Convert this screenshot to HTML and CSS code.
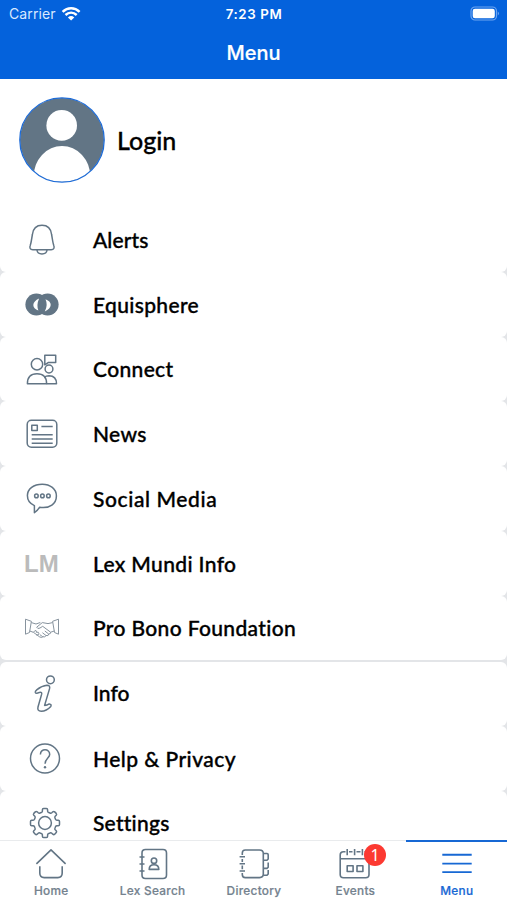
FILE: index.html
```html
<!DOCTYPE html>
<html lang="en">
<head>
  <meta charset="UTF-8" />
  <meta name="viewport" content="width=device-width, initial-scale=1">
  <title>Menu</title>
  <link rel="stylesheet" href="styles.css">
</head>
<body>
  <div class="app">
    <header class="header">
      <div class="status">
        <div class="carrier">
          Carrier
          <svg width="19" height="14" viewBox="0 0 19 14" fill="none" stroke="#fff" stroke-width="2.5">
            <path d="M0.6 4.8C5.6 0 12.6 0 17.6 4.8"/>
            <path d="M3.5 8C6.8 5 11.4 5 14.7 8"/>
            <path d="M9.1 13.4L5.9 10.4Q9.1 7.7 12.3 10.4Z" fill="#fff" stroke="none"/>
          </svg>
        </div>
        <div class="time">7:23 PM</div>
        <div class="battery">
          <svg width="31" height="15" viewBox="0 0 31 15">
            <rect x="2" y="1" width="25.5" height="13" rx="4" fill="none" stroke="#6ea5f0" stroke-width="1.2"/>
            <rect x="3.7" y="2.7" width="22.1" height="9.6" rx="2.3" fill="#fff"/>
            <path d="M28.8 5.5Q31.2 7.5 28.8 9.5Z" fill="#6ea5f0"/>
          </svg>
        </div>
      </div>
      <h1>Menu</h1>
    </header>

    <main class="content">
      <a class="login">
        <svg class="avatar" width="87" height="87" viewBox="0 0 87 87">
          <clipPath id="face"><circle cx="44" cy="43" r="42"/></clipPath>
          <circle cx="44" cy="43" r="42" fill="#627585"/>
          <circle cx="43.7" cy="28.4" r="15.3" fill="#fff"/>
          <ellipse cx="44" cy="79.5" rx="28.3" ry="30.5" fill="#fff" clip-path="url(#face)"/>
          <circle cx="44" cy="43" r="42.2" fill="none" stroke="#1e6cd8" stroke-width="1.3"/>
        </svg>
        <span>Login</span>
      </a>

      <nav class="section">
        <a class="row first">
          <svg class="icon" viewBox="0 0 36 36">
            <path d="M18 4.2C12 4.2 9 8.3 8.4 13.5L7.3 20Q7 22 6.3 24.2C5.2 27 6.2 28.7 8.8 28.7H27.2C29.8 28.7 30.8 27 29.7 24.2Q29 22 28.7 20L27.6 13.5C27 8.3 24 4.2 18 4.2Z"/>
            <path d="M13 29C13.5 34.2 22.5 34.2 23 29"/>
          </svg>
          <span class="label alerts">Alerts</span>
        </a>
        <a class="row">
          <svg class="icon" viewBox="0 0 36 36">
            <g class="solid">
              <circle cx="12.4" cy="18.5" r="11"/>
              <circle cx="23.6" cy="18.5" r="11"/>
            </g>
            <path class="hole" d="M15.1 12.5Q9.6 15 9.3 19Q9.4 22.7 14.4 24.6Q12.2 19 15.1 12.5Z"/>
            <path class="hole" d="M21.5 13.2Q27 15.5 26.7 19Q26.5 22.5 20.8 25.5Q24.2 19 21.5 13.2Z"/>
          </svg>
          <span class="label equisphere">Equisphere</span>
        </a>
        <a class="row">
          <svg class="icon" viewBox="0 0 36 36">
            <circle cx="13" cy="13.2" r="5.7"/>
            <path d="M3.4 32.7Q3.4 22.8 13 22.8T22.6 32.7Z"/>
            <circle cx="25" cy="18" r="3.9"/>
            <path d="M20.2 26.3Q22 24.8 25 24.8Q32.5 25 32.5 32.7H22.6"/>
            <path d="M20.8 4.3H31.7V11.4H24.5L20.8 13.8Z"/>
          </svg>
          <span class="label connect">Connect</span>
        </a>
        <a class="row">
          <svg class="icon" viewBox="0 0 36 36">
            <rect x="3.2" y="4.3" width="29.6" height="27" rx="4.2"/>
            <rect x="7.8" y="9.3" width="5.5" height="5.3"/>
            <path d="M17.4 10.4H28.7M7.7 18.7H28.7M7.7 23H28.7M7.7 27.2H28.7"/>
          </svg>
          <span class="label news">News</span>
        </a>
        <a class="row">
          <svg class="icon" viewBox="0 0 36 36">
            <path d="M10.4 25.6V32.7Q13.6 30.5 15.5 27.3C26 29 32.4 23.4 32.4 16C32.4 8.8 26.2 4.2 18.2 4.2C9.8 4.2 3.4 8.8 3.4 15.6C3.4 20.2 6 23.8 10.4 25.6Z"/>
            <g>
              <circle cx="12.4" cy="15.9" r="1.8"/>
              <circle cx="18.4" cy="15.9" r="1.8"/>
              <circle cx="24.4" cy="15.9" r="1.8"/>
            </g>
          </svg>
          <span class="label social">Social Media</span>
        </a>
        <a class="row">
          <span class="icon monogram">LM</span>
          <span class="label lex">Lex Mundi Info</span>
        </a>
        <a class="row">
          <svg class="icon thin" viewBox="0 0 36 36">
            <path d="M1.5 9.2L7.4 11.3L5.5 22.5L1.5 24.2ZM34.5 9.2L28.6 11.3L30.5 22.5L34.5 24.2Z"/>
            <path d="M7.4 12.6L12 14L16.3 12.5M28.6 12.6L24 13.6L18.3 12.6L12.7 17.2Q13.5 19.4 16 18L18.7 16.3L26.6 22.2Q26.8 24.2 24.7 24L20.8 21M5.7 21L9.4 22.3L15.8 27Q18 28.2 19.3 26.4M30.3 21L26.7 22.2M24.7 24Q24.6 26.4 22 25.5L18.4 22.7M22 25.5Q21 28.1 18.4 26.5L15.8 24.6"/>
            <path d="M9.4 22.3L11.2 20.4Q12.8 20.4 12.3 22.3L14.2 22.2Q15.5 23 14.3 24.8L12.2 25"/>
          </svg>
          <span class="label probono">Pro Bono Foundation</span>
        </a>
      </nav>

      <nav class="section second">
        <a class="row">
          <svg class="icon" viewBox="0 0 36 36">
            <circle cx="26.4" cy="4.8" r="3.9"/>
            <path d="M11.3 17.5Q11 16.2 12.7 14.8Q17.8 10.6 23 10.2Q26.5 10.2 25.5 13.9L20.6 30.4Q23 30.4 25.3 28.9Q27.8 29.2 26.8 31.4Q22.5 36 17.2 36.2Q13 36.2 14 32L17.6 19.4Q18.3 16.7 15.4 17.4Q12 19.2 11.3 17.5Z"/>
          </svg>
          <span class="label info">Info</span>
        </a>
        <a class="row">
          <svg class="icon shifted" viewBox="0 0 36 36">
            <circle cx="18" cy="18.5" r="14.5"/>
            <path d="M13.4 14.5C13.4 8.1 22.8 8.3 22.7 14.5C22.6 18 18.2 18.3 18.1 23.8" />
            <circle class="solid" cx="18" cy="27.2" r="1.2"/>
          </svg>
          <span class="label help">Help &amp; Privacy</span>
        </a>
        <a class="row">
          <svg class="icon shifted" viewBox="0 0 36 36">
            <circle cx="18" cy="18" r="6.4"/>
            <path d="M16.6 3.5H19.4Q20.6 3.5 20.6 4.8V6.2Q20.7 7.2 21.7 7.5L23 8Q24 8.5 24.8 7.8L25.8 6.8Q26.8 6 27.7 6.9L29.2 8.4Q30 9.3 29.2 10.2L28.2 11.2Q27.5 12 28 13L28.5 14.3Q28.9 15.3 29.9 15.3H31.2Q32.5 15.4 32.5 16.6V19.4Q32.5 20.6 31.2 20.7H29.9Q28.9 20.7 28.5 21.7L28 23Q27.5 24 28.2 24.8L29.2 25.8Q30 26.8 29.2 27.6L27.7 29.2Q26.8 30 25.8 29.2L24.8 28.2Q24 27.5 23 28L21.7 28.5Q20.7 28.8 20.6 29.8V31.2Q20.6 32.5 19.4 32.5H16.6Q15.4 32.5 15.4 31.2V29.8Q15.3 28.8 14.3 28.5L13 28Q12 27.5 11.2 28.2L10.2 29.2Q9.2 30 8.3 29.2L6.8 27.6Q6 26.8 6.8 25.8L7.8 24.8Q8.5 24 8 23L7.5 21.7Q7.1 20.7 6.1 20.7H4.8Q3.5 20.6 3.5 19.4V16.6Q3.5 15.4 4.8 15.3H6.1Q7.1 15.3 7.5 14.3L8 13Q8.5 12 7.8 11.2L6.8 10.2Q6 9.3 6.8 8.4L8.3 6.9Q9.2 6 10.2 6.8L11.2 7.8Q12 8.5 13 8L14.3 7.5Q15.3 7.2 15.4 6.2V4.8Q15.4 3.5 16.6 3.5Z"/>
          </svg>
          <span class="label settings">Settings</span>
        </a>
      </nav>
    </main>

    <footer class="tabs">
      <a class="tab">
        <svg viewBox="0 0 36 36">
          <path d="M3.4 17.9L18 3.8L32.6 17.9M6.8 20.3V27Q6.8 31.6 11.2 31.6H24.8Q29.2 31.6 29.2 27V20.3"/>
        </svg>
        <span>Home</span>
      </a>
      <a class="tab">
        <svg viewBox="0 0 36 36">
          <path d="M7 9V7Q7 3.5 10.5 3.5H28Q31.5 3.5 31.5 7V29Q31.5 32.5 28 32.5H10.5Q7 32.5 7 29V27.3M7 9V27.3M4.5 11H9.5M4.5 18H9.5M4.5 25H9.5"/>
          <circle cx="19" cy="14.7" r="2.7"/>
          <path d="M14.2 23.4Q14.2 18.8 19 18.8T23.8 23.4Z"/>
        </svg>
        <span>Lex Search</span>
      </a>
      <a class="tab">
        <svg viewBox="0 0 36 36">
          <path d="M6.3 9V7Q6.3 4 9.3 4H23.5Q27.3 4 27.3 7.5V28Q27.3 31.6 23.5 31.6H9.3Q6.3 31.6 6.3 28.5V27M6.3 13V16M6.3 19.5V23.3M3.6 10.8H9M3.6 17.8H9M3.6 25H9"/>
          <path d="M27.3 7.5H31Q32.2 7.5 32.2 8.7V13L31 14.2H27.3M32.2 16.5V21.2L31 22.4H27.3M32.2 24V28L31 29.3H27.3"/>
        </svg>
        <span>Directory</span>
      </a>
      <a class="tab">
        <svg viewBox="0 0 36 36">
          <path d="M3.2 12.7H32M8.5 5.7H6.5Q3.2 5.7 3.2 9V28.5Q3.2 31.8 6.5 31.8H28.7Q32 31.8 32 28.5V9Q32 5.7 28.7 5.7H27.5M12 5.7H15.5M19.5 5.7H23.5M10.2 3V9.3M17.6 3V9.3M25.4 3V9.3"/>
          <rect x="10.2" y="19.8" width="5.9" height="5.7"/>
          <rect x="20" y="19.8" width="5.9" height="5.7"/>
        </svg>
        <span>Events</span>
        <b class="badge">1</b>
      </a>
      <a class="tab active">
        <svg viewBox="0 0 36 36">
          <path d="M3.3 8.8H32.7M3.3 17.6H32.7M3.3 26.1H32.7"/>
        </svg>
        <span>Menu</span>
      </a>
    </footer>
  </div>
</body>
</html>
```

FILE: styles.css
```css
* { box-sizing: border-box; }
body { margin: 0; background: #fff; font-family: Inter, "Liberation Sans", sans-serif; color: #000; }
.app { height: 900px; display: flex; flex-direction: column; overflow: hidden; }
svg { display: block; flex: none; overflow: visible; }

/* header */
.header { height: 79px; flex: none; background: #0462dc; color: #fff; }
.status { height: 27px; display: grid; grid-template-columns: 1fr auto 1fr; align-items: center; padding: 0 7px 0 9px; font-size: 13.3px; }
.carrier { display: flex; align-items: center; gap: 6px; color: #d9e9ff; font-size: 14px; letter-spacing: 0.1px; }
.time { margin-right: 1px; font-weight: 600; letter-spacing: 0.6px; }
.battery { display: flex; justify-content: flex-end; }
.header h1 { margin: 0; font-size: 20px; line-height: 52px; font-weight: 500; text-align: center; -webkit-text-stroke: 0.2px; }

/* menu */
.content { flex: 1; min-height: 0; overflow: hidden; }
.login { height: 128px; display: flex; align-items: center; gap: 12px; padding: 0 18px 6px; font: 500 25px Lato, sans-serif; -webkit-text-stroke: 0.3px; }
.section { background: #e3e5e8; }
.second { padding-top: 2px; }
.row { height: 64.75px; display: flex; align-items: center; padding-left: 24px; background: #fff; border-radius: 6px; }
.first { border-radius: 0 0 6px 6px; }
.second .row:first-child { height: 63.5px; padding-bottom: 3px; }
.icon { width: 36px; height: 36px; margin-right: 33px; fill: none; stroke: #627585; stroke-width: 1.5; stroke-linejoin: round; }
.shifted { position: relative; left: 3px; }
.thin { stroke: #87939e; stroke-width: 1; }
.solid { fill: #627585; stroke: none; }
.hole { fill: #fff; stroke: none; }
.monogram { color: #bbb; font: bold 24px/38px "Liberation Sans", sans-serif; }
.label { font: 500 21px Lato, sans-serif; letter-spacing: 0.35px; font-variant-ligatures: none; -webkit-text-stroke: 0.35px; white-space: nowrap; }
.alerts { letter-spacing: 0.1px; }
.social { letter-spacing: 0.6px; }
.help { letter-spacing: 0.45px; }
.info { letter-spacing: 0; }
.settings { letter-spacing: 0.25px; }

/* tab bar */
.tabs { height: 60px; flex: none; display: grid; grid-template-columns: repeat(5, 1fr); border-top: 1px solid #e9ebed; background: #fff; }
.tab { position: relative; display: flex; flex-direction: column; align-items: center; padding-top: 5px; color: #74828e; font-size: 11.8px; font-weight: 500; letter-spacing: 0.3px; -webkit-text-stroke: 0.2px; }
.tab svg { width: 36px; height: 36px; margin-left: 1px; fill: none; stroke: #627585; stroke-width: 1.6; stroke-linejoin: round; }
.tab span { line-height: 18px; padding-left: 1px; }
.active { margin-top: -1px; padding-top: 4px; border-top: 2px solid #1768d4; color: #1768d4; }
.active svg { stroke: #1768d4; stroke-width: 1.9; }
.badge { position: absolute; left: 60px; top: 3px; width: 22px; height: 22px; border-radius: 50%; background: #fc3931; color: #fff; font: 16px/22px "Noto Sans", sans-serif; text-align: center; -webkit-text-stroke: 0; }
```
